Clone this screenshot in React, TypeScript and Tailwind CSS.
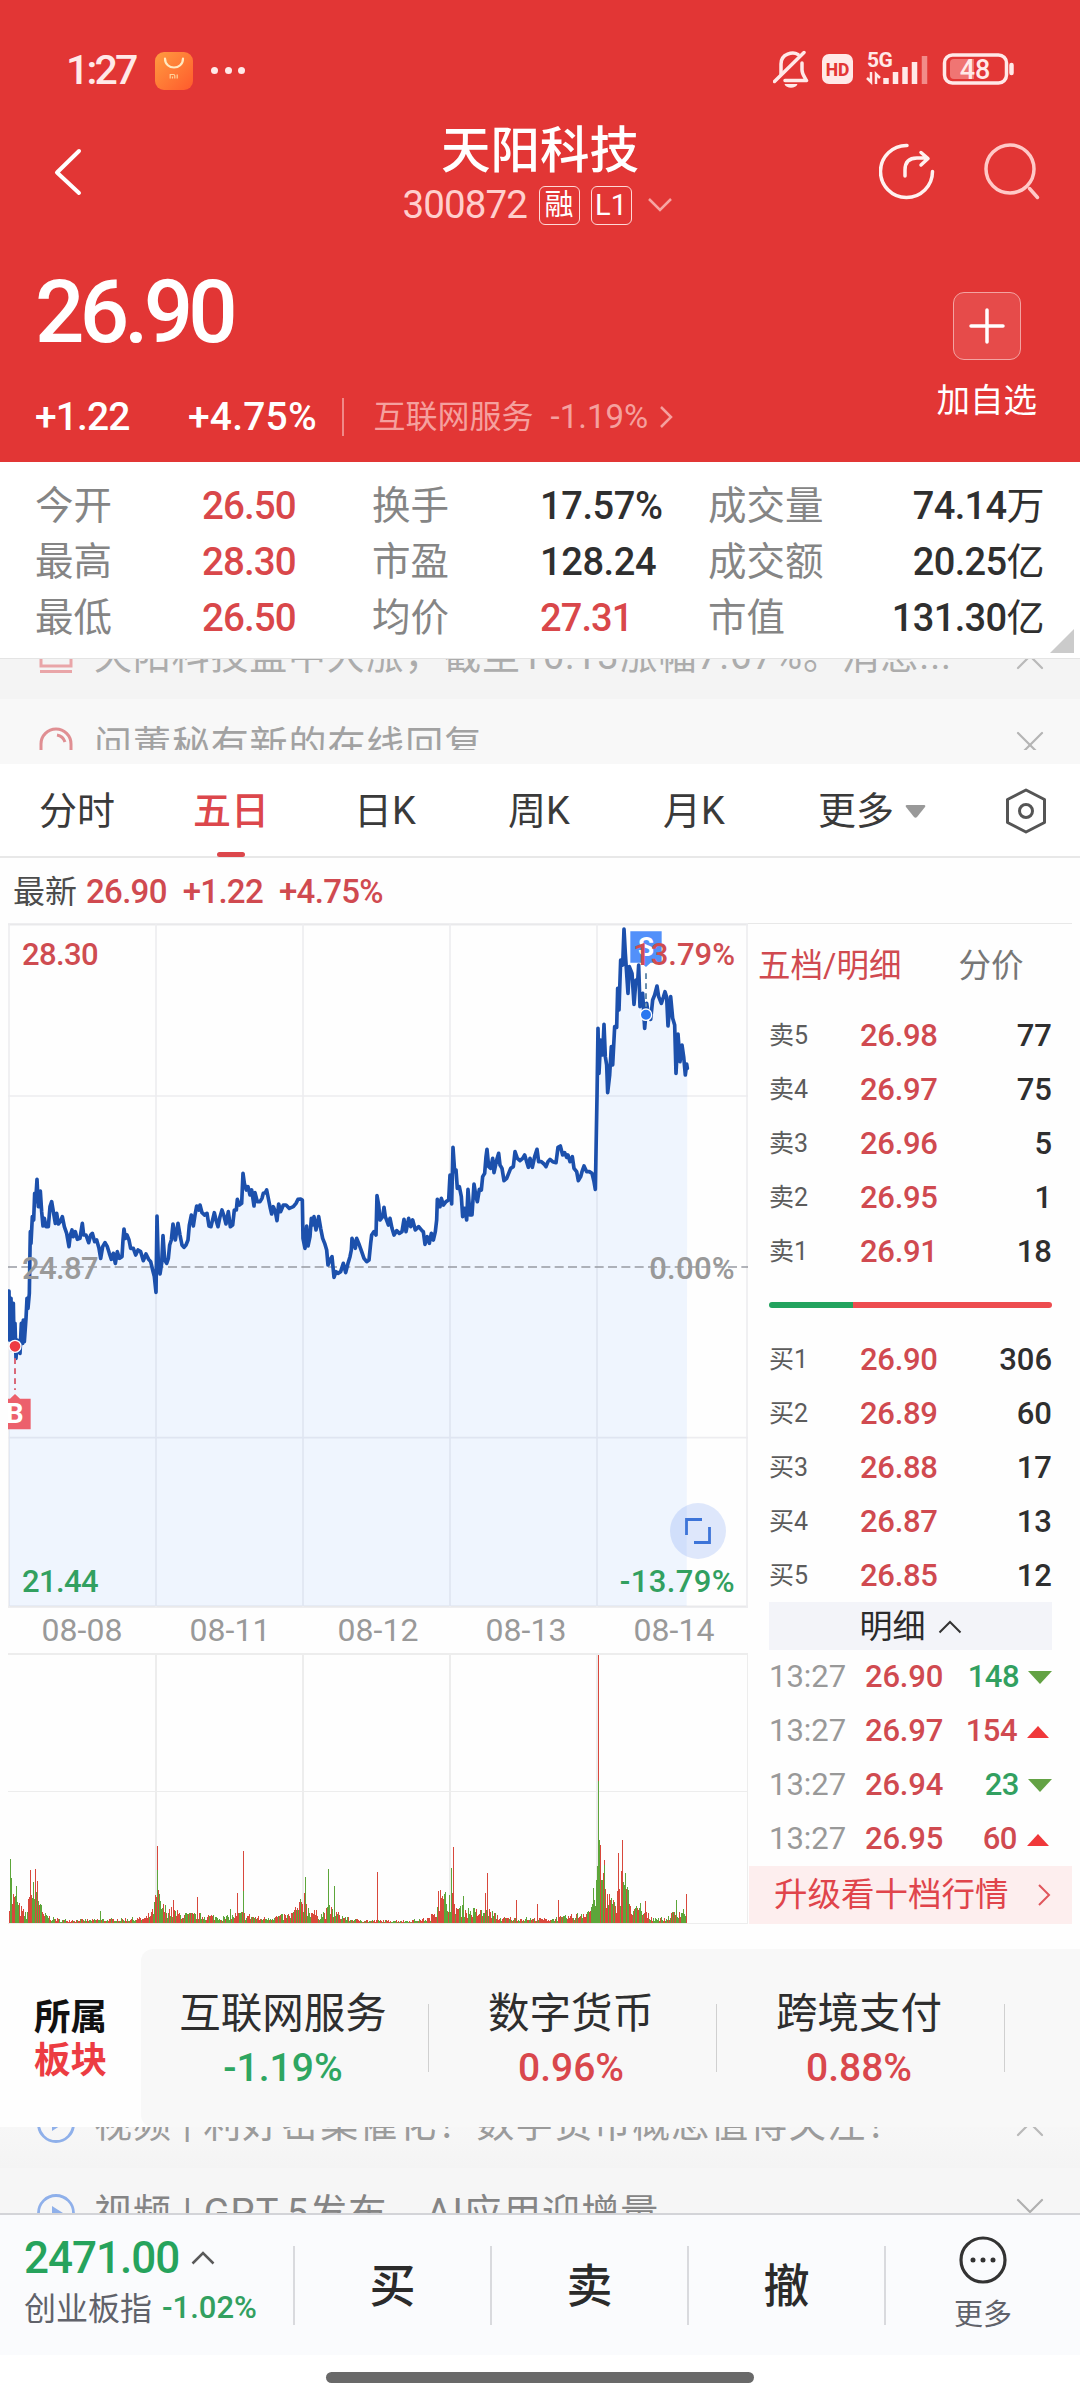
import { ChevronDown, ChevronUp, X } from "lucide-react"

const stats = [
  ["今开", "26.50", "换手", "17.57%", "成交量", "74.14万"],
  ["最高", "28.30", "市盈", "128.24", "成交额", "20.25亿"],
  ["最低", "26.50", "均价", "27.31", "市值", "131.30亿"],
]

const asks = [
  ["卖5", "26.98", "77"],
  ["卖4", "26.97", "75"],
  ["卖3", "26.96", "5"],
  ["卖2", "26.95", "1"],
  ["卖1", "26.91", "18"],
]

const bids = [
  ["买1", "26.90", "306"],
  ["买2", "26.89", "60"],
  ["买3", "26.88", "17"],
  ["买4", "26.87", "13"],
  ["买5", "26.85", "12"],
]

const trades = [
  { time: "13:27", price: "26.90", volume: "148", up: false },
  { time: "13:27", price: "26.97", volume: "154", up: true },
  { time: "13:27", price: "26.94", volume: "23", up: false },
  { time: "13:27", price: "26.95", volume: "60", up: true },
]

const sectors = [
  { name: "互联网服务", change: "-1.19%" },
  { name: "数字货币", change: "0.96%" },
  { name: "跨境支付", change: "0.88%" },
]

const dates = ["08-08", "08-11", "08-12", "08-13", "08-14"]

// price line, drawn on a canvas three times the size of the chart
const priceLine =
  "27,1143 29,1290 33,1165 36,1320 40,1180 42,1290 45,1240 48,1345 52,1290 60,1330 64,1240 68,1300 70,1230 73,1295 78,1225 81,1165 84,1195 88,1150 90,1020 91,965 93,1000 97,920 101,930 104,850 107,875 111,808 115,890 121,843 125,905 129,948 133,925 138,950 145,950 150,890 155,875 160,905 166,940 170,910 175,942 181,935 187,920 193,950 200,970 207,1010 211,975 216,960 220,980 226,965 232,988 240,985 247,940 251,975 258,975 266,998 272,975 277,970 284,995 290,990 297,1015 302,1045 308,1010 315,998 322,1010 328,1030 334,1048 340,1030 346,1060 352,1025 358,1045 366,1040 369,990 372,957 376,985 381,975 387,990 392,1015 400,1015 407,1035 414,1020 422,1025 430,1052 438,1032 446,1048 452,1055 458,1080 463,1100 468,1147 " +
  "471,918 475,1060 480,1092 485,1060 489,977 494,1050 500,1060 505,1045 509,1005 514,990 519,942 526,990 534,940 540,975 546,1005 552,1012 558,1005 564,990 568,945 574,915 580,948 585,915 590,888 596,900 600,885 606,908 614,915 621,910 627,948 633,950 643,908 648,930 654,950 660,920 666,900 672,918 678,942 685,905 691,950 698,945 703,900 709,900 712,868 718,885 725,880 729,790 733,820 739,840 744,830 750,855 755,840 762,888 765,848 772,875 780,875 786,865 790,850 796,848 800,840 806,870 811,895 815,912 820,890 826,905 831,932 836,882 842,905 850,885 858,885 868,895 880,890 888,880 894,868 902,867 907,870 " +
  "909,985 915,1015 920,948 924,1008 930,980 934,925 938,945 942,920 948,960 956,920 962,955 968,985 974,1000 980,1020 984,1065 990,1050 996,1040 1002,1102 1008,1085 1014,1090 1022,1085 1030,1060 1037,1088 1044,1060 1050,1040 1054,1020 1056,985 1062,1000 1066,1015 1070,985 1078,1005 1085,1025 1092,1045 1100,1055 1107,1050 1112,1000 1115,975 1122,965 1128,975 1131,857 1136,885 1140,930 1148,920 1152,892 1156,920 1165,945 1170,925 1176,955 1182,975 1190,962 1198,970 1206,965 1212,928 1218,965 1226,925 1232,950 1238,930 1246,960 1256,950 1266,962 1270,965 1275,1003 1282,980 1288,1000 1294,970 1300,990 1306,965 1310,930 1312,868 1320,890 1324,865 1330,885 1338,875 1346,870 " +
  "1350,795 1355,882 1359,712 1364,785 1368,780 1372,835 1378,830 1384,860 1388,920 1394,895 1400,930 1404,838 1410,915 1416,915 1422,822 1428,860 1432,875 1438,838 1444,840 1448,800 1454,790 1458,740 1461,718 1466,770 1472,775 1478,745 1482,788 1490,750 1496,730 1500,765 1506,775 1512,812 1520,805 1526,790 1532,775 1540,770 1545,725 1552,745 1560,752 1568,745 1574,735 1580,755 1585,772 1590,745 1597,772 1604,740 1611,718 1616,755 1624,755 1632,762 1638,770 1644,755 1650,748 1658,755 1668,758 1674,712 1681,708 1688,735 1694,728 1700,742 1704,735 1710,755 1717,740 1722,775 1730,785 1735,812 1742,800 1746,785 1752,768 1760,785 1768,785 1776,790 1782,815 1786,838 " +
  "1791,560 1794,355 1797,490 1802,390 1808,435 1812,343 1816,440 1820,465 1823,548 1829,495 1834,410 1838,465 1844,350 1850,352 1853,235 1857,300 1862,150 1868,165 1872,57 1876,130 1884,250 1888,170 1896,190 1902,283 1908,210 1913,215 1916,165 1920,290 1928,250 1934,355 1940,280 1946,320 1952,328 1958,270 1964,255 1971,228 1976,260 1984,280 1990,262 1995,245 2000,262 2004,348 2012,260 2018,325 2024,345 2028,490 2034,372 2040,455 2046,405 2051,440 2056,495 2060,462 2062,475"

// [x, typical height] of the volume bars
const envelope = [
  [9, 40], [14, 32], [20, 18], [26, 10], [30, 38], [37, 46], [42, 12], [50, 7], [60, 4], [100, 4], [145, 6], [152, 14],
  [157, 38], [162, 20], [180, 11], [200, 10], [225, 7], [240, 12], [260, 6], [290, 10], [302, 26], [312, 15], [320, 10],
  [330, 18], [340, 9], [350, 5], [370, 3], [410, 3], [430, 6], [438, 26], [450, 36], [458, 18], [480, 14], [490, 14],
  [500, 6], [550, 5], [575, 9], [590, 18], [597, 55], [600, 75], [607, 36], [615, 20], [620, 55], [625, 52], [630, 22],
  [640, 15], [650, 8], [665, 5], [675, 14], [687, 16],
]

const spikes: [number, number, string][] = [
  [10, 64, "g"], [11, 45, "g"], [16, 37, "g"], [30, 53, "r"], [35, 54, "r"], [37, 42, "r"], [100, 12, "g"],
  [157, 77, "r"], [157, 53, "g"], [173, 23, "r"], [197, 26, "r"], [230, 14, "g"], [237, 30, "r"], [243, 72, "r"],
  [243, 32, "g"], [304, 30, "r"], [305, 46, "g"], [328, 54, "g"], [334, 37, "g"], [377, 51, "r"], [438, 32, "r"],
  [440, 33, "r"], [451, 55, "g"], [453, 76, "r"], [463, 27, "g"], [485, 30, "r"], [487, 50, "r"], [516, 23, "r"],
  [537, 19, "r"], [558, 23, "r"], [598, 268, "r"], [598, 142, "g"], [599, 83, "g"], [600, 78, "r"], [604, 63, "r"],
  [604, 58, "g"], [618, 70, "r"], [622, 83, "r"], [625, 50, "g"], [640, 20, "g"], [645, 22, "r"], [676, 23, "g"], [686, 29, "r"],
]

function buildBars() {
  const bars: [number, number, string][] = []
  let seed = 7
  const next = () => {
    seed = (seed * 16807) % 2147483647
    return seed / 2147483647
  }
  let k = 0
  for (let x = 9; x < 687; x++) {
    while (k < envelope.length - 2 && envelope[k + 1][0] <= x) k++
    const [x0, h0] = envelope[k]
    const [x1, h1] = envelope[k + 1]
    const base = h0 + ((h1 - h0) * (x - x0)) / (x1 - x0)
    bars.push([x, Math.max(1, Math.round(base * (0.3 + next() * 0.75))), next() > 0.48 ? "r" : "g"])
  }
  return bars.concat(spikes)
}

const bars = buildBars()

function StatusBar() {
  return (
    <div className="flex h-[106px] items-center pt-[35px] pr-[65px] pl-[66px] text-[#ffe9e8]">
      <span className="w-[89px] text-[41px] font-medium leading-none tracking-[-2.800px]">1:27</span>
      <svg width="38" height="38" viewBox="0 0 38 38">
        <defs>
          <linearGradient id="mi" x1="0" y1="0" x2="1" y2="1">
            <stop offset="0" stopColor="#ff9c40" />
            <stop offset="1" stopColor="#ff5a2c" />
          </linearGradient>
        </defs>
        <rect width="38" height="38" rx="9" fill="url(#mi)" />
        <path d="M10 6.500c0 12 18 12 18 0" fill="none" stroke="#ffe9c0" strokeWidth="2.200" strokeLinecap="round" />
        <path d="M15.200 26.500v-4h3.300q1.300 0 1.300 1.300v2.700M17.500 24.500v2M22.200 22.500v4" fill="none" stroke="#ffd49a" strokeWidth="1.200" />
      </svg>
      <div className="ml-[18px] flex gap-[6px]">
        <span className="size-[7px] rounded-full bg-[#ffe9e8]" />
        <span className="ml-[0.500px] size-[7px] rounded-full bg-[#ffe9e8]" />
        <span className="size-[7px] rounded-full bg-[#ffe9e8]" />
      </div>
      <svg className="ml-auto" width="242" height="42" viewBox="0 0 242 42" fill="none" stroke="#ffe9e8">
        <path d="M25 4.500C20 1.500 8 3.500 8 14v10M29 13v7c0 4 2 6 4.500 10.500H12" strokeWidth="3.500" strokeLinecap="round" strokeLinejoin="round" />
        <path d="M1.500 31.500L31 2.500" strokeWidth="3.500" strokeLinecap="round" />
        <path d="M11.500 34h13c-1.500 5-11.500 5-13 0z" fill="#ffe9e8" stroke="none" />
        <rect x="49" y="4" width="31" height="30" rx="7" fill="#ffe9e8" stroke="none" />
        <text x="64.500" y="25.500" textAnchor="middle" fill="#e23635" stroke="none" fontSize="17.500" fontWeight="800">HD</text>
        <text x="94" y="16.500" fill="#ffe9e8" stroke="none" fontSize="21" fontWeight="700" letterSpacing="-0.5">5G</text>
        <path d="M94 28l4 4v-10M103 34V24l4 4" strokeWidth="2.500" />
        <path d="M113 34v-6M122.500 34V22M132 34V17M141.500 34V12" strokeWidth="5.500" />
        <path d="M151.500 34V6" stroke="#f28b89" strokeWidth="5.500" />
        <rect x="171.500" y="5" width="62" height="28" rx="8" strokeWidth="3.500" />
        <path d="M178 9h23v20h-20q-4 0-4-4V13q0-4 4-4z" fill="#f07573" stroke="none" />
        <path d="M238.500 15v8" strokeWidth="4.500" strokeLinecap="round" />
        <text x="202" y="28.500" textAnchor="middle" fill="#ffe9e8" stroke="none" fontSize="27" fontWeight="500">48</text>
      </svg>
    </div>
  )
}

function Header() {
  return (
    <header className="h-[462px] bg-[#e23635] text-white">
      <StatusBar />
      <div className="flex h-[132px] pt-[14px]">
        <div className="w-[300px] pt-[27px] pl-[52px]">
          <svg width="32" height="50" viewBox="0 0 32 50" fill="none" stroke="white" strokeWidth="4" strokeLinecap="round" strokeLinejoin="round">
            <path d="M27 4L5 25.500 27 46" />
          </svg>
        </div>
        <div className="flex w-[480px] flex-col items-center">
          <h1 className="h-[55px] pt-[2px] text-[49.500px] leading-[58px] font-medium">天阳科技</h1>
          <div className="mr-[5px] flex h-[60px] items-center">
            <span className="w-[136px] text-[38.500px] leading-none tracking-[-0.9px] text-[#ffcfcd]">300872</span>
            <span className="flex h-[39px] w-[41px] items-center justify-center rounded-[6px] border-[1.500px] border-[#ffd8d6] text-[29px] leading-none">融</span>
            <span className="ml-[11px] flex h-[39px] w-[41px] items-center justify-center rounded-[6px] border-[1.500px] border-[#ffd8d6] text-[29px] leading-none">L1</span>
            <svg className="ml-[15px]" width="26" height="16" viewBox="0 0 26 16" fill="none" stroke="#f7a5a3" strokeWidth="2.500">
              <path d="M2 2l11 11L24 2" />
            </svg>
          </div>
        </div>
        <svg className="ml-[99px]" width="164" height="104" viewBox="879 120 164 104" fill="none" strokeLinecap="round" strokeLinejoin="round">
          <path d="M907 145.500a26 26 0 1 0 25.500 26" stroke="#fff1f0" strokeWidth="3.500" />
          <path d="M905 176v-6c0-9 5-12 12-12h10M921 152.500l7 6-7 6.500" stroke="#fff1f0" strokeWidth="3.500" />
          <circle cx="1010" cy="169" r="24" stroke="#ffc9c7" strokeWidth="3.500" />
          <path d="M1029.500 188.500l8 9" stroke="#ffc9c7" strokeWidth="3.500" />
        </svg>
      </div>
      <div className="flex h-[224px] justify-between pr-[43px] pl-[35px]">
        <div>
          <div className="h-[132px] pt-[26px] text-[87px] leading-[96px] font-medium tracking-[-4.800px]">26.90</div>
          <div className="flex h-[94px] items-center text-[39px] font-medium">
            <span className="w-[153px] tracking-[-0.9px]">+1.22</span>
            <span className="w-[154px] tracking-[0.2px]">+4.75%</span>
            <span className="h-[38px] w-[1.500px] bg-[#f08988]" />
            <span className="ml-[30px] text-[32px] font-normal text-[#f5a09e]">互联网服务</span>
            <span className="ml-[17px] text-[33px] font-normal text-[#f5a09e]">-1.19%</span>
            <svg className="ml-[11px]" width="14" height="24" viewBox="0 0 14 24" fill="none" stroke="#f5a09e" strokeWidth="2.500">
              <path d="M2 2l10 10L2 22" />
            </svg>
          </div>
        </div>
        <div className="flex flex-col items-center pt-[54px]">
          <div className="flex size-[68px] items-center justify-center rounded-[11px] border-[1.500px] border-[#f3a3a1] bg-[#e64b4a]">
            <svg width="36" height="36" viewBox="0 0 36 36" stroke="white" strokeWidth="3.500" strokeLinecap="round">
              <path d="M18 2v32M2 18h32" />
            </svg>
          </div>
          <span className="mt-[20px] text-[33.500px] leading-[42px]">加自选</span>
        </div>
      </div>
    </header>
  )
}

function Stats() {
  return (
    <section className="relative h-[197px] border-b border-[#e4e4e4] bg-white pt-[16px] pr-[36px] pl-[35px]">
      {stats.map(([a, av, b, bv, c, cv]) => (
        <div key={a} className="flex h-[56px] items-center text-[38px] text-[#858585]">
          <span className="w-[167px] text-[38.500px]">{a}</span>
          <span className="w-[170px] text-[38.500px] font-medium tracking-[-0.9px] text-[#d9474a]">{av}</span>
          <span className="w-[168px] text-[38.500px]">{b}</span>
          <span className={bv === "27.31" ? "w-[168px] font-medium tracking-[-0.9px] text-[#d9474a]" : "w-[168px] font-medium tracking-[-0.4px] text-[#2f2f2f]"}>{bv}</span>
          <span className="text-[38.500px]">{c}</span>
          <span className="ml-auto tracking-[-0.6px] text-[#2f2f2f]">
            <span className="font-medium">{cv.slice(0, -1)}</span>
            {cv.slice(-1)}
          </span>
        </div>
      ))}
      <svg className="absolute right-[6px] bottom-[5px]" width="24" height="24" viewBox="0 0 24 24">
        <path d="M24 0v24H0z" fill="#cbcbcb" />
      </svg>
    </section>
  )
}

function TopNotices() {
  return (
    <section className="h-[105px]">
      <div className="flex h-[40px] overflow-hidden bg-[#f4f4f4]">
        <div className="mt-[-29px] flex h-[52px] w-full items-center pr-[26px] pl-[38px] text-[#acacac]">
          <svg width="36" height="40" viewBox="0 0 36 40" fill="none" stroke="#e9a5a8" strokeWidth="3">
            <path d="M3 4h30v26H3zM2 35.500h32M9 12h18M9 20h18" />
          </svg>
          <span className="ml-[20px] text-[38px] tracking-[0.8px] whitespace-nowrap">天阳科技盘中大涨，截至10:13涨幅7.67%。消息...</span>
          <ChevronUp className="mt-[12px] ml-auto size-[48px] shrink-0 text-[#b9b9b9]" strokeWidth={1.1} />
        </div>
      </div>
      <div className="h-[65px] bg-[#f8f8f8]">
        <div className="h-[51px] overflow-hidden">
          <div className="mt-[20px] flex h-[52px] items-center pr-[26px] pl-[38px] text-[#a2a2a2]">
            <svg width="36" height="40" viewBox="0 0 36 40" fill="none" stroke="#e08f93" strokeWidth="3">
              <path d="M3 36V19a15 15 0 0 1 30 0v17zM19 10q6 1 8 7" />
            </svg>
            <span className="ml-[20px] text-[38px] tracking-[0.9px]">问董秘有新的在线回复</span>
            <X className="ml-auto size-[48px] text-[#b5b5b5]" strokeWidth={1.1} />
          </div>
        </div>
      </div>
    </section>
  )
}

function Tabs() {
  return (
    <nav className="flex h-[94px] items-center border-b-2 border-[#e8e8e8] bg-white pt-[2px] pl-[39px] text-[38px] text-[#3a3a3a]">
      <span className="w-[154px]">分时</span>
      <span className="relative flex h-full w-[161px] items-center font-medium text-[#dc474c]">
        五日
        <i className="absolute bottom-[-1px] left-[24px] h-[5px] w-[28px] rounded-full bg-[#dc474c]" />
      </span>
      <span className="w-[154px]">日K</span>
      <span className="w-[155px]">周K</span>
      <span className="w-[155px]">月K</span>
      <span>更多</span>
      <svg className="ml-[11px]" width="21" height="13" viewBox="0 0 21 13">
        <path d="M2 0h17q2 0 1 2l-8 10q-1.500 1.500-3 0L1 2q-1-2 1-2z" fill="#999" />
      </svg>
      <svg className="ml-[78px]" width="44" height="48" viewBox="0 0 44 48" fill="none" stroke="#555" strokeWidth="3" strokeLinejoin="round">
        <path d="M22 3l18.500 9.500v23L22 45 3.500 35.500v-23z" />
        <circle cx="22" cy="24" r="6.500" />
      </svg>
    </nav>
  )
}

function PriceChart() {
  return (
    <div className="relative h-[685px]">
      <svg width="740" height="685" viewBox="24 39 2220 2055" fill="none">
        <path d="M24 43h2220M24 2090h2220" stroke="#e9e9eb" strokeWidth="7" />
        <path d="M24 558h2220M24 1583h2220M27 43v2050M468 43v2050M909 43v2050M1350 43v2050M1791 43v2050M2241 43v2050" stroke="#ededf0" strokeWidth="5" />
        <polygon points={`27,2088 ${priceLine} 2060,2088`} fill="#3b8cff" fillOpacity="0.08" />
        <path d="M24 1071h2220" stroke="#989ba3" strokeWidth="5" strokeDasharray="27 13" />
        <polyline points={priceLine} stroke="#1c50ac" strokeWidth="11" strokeLinejoin="round" strokeLinecap="round" />
        <path d="M45 1345v95" stroke="#d9697a" strokeWidth="6" strokeDasharray="17 13" />
        <circle cx="45" cy="1309" r="18" fill="#ee3b43" stroke="white" strokeWidth="4" />
        <path d="M24 1466h6l15-14 15 14h32v92H24z" fill="#ec606c" />
        <text x="44" y="1540" textAnchor="middle" fill="white" fontSize="84" fontWeight="700">B</text>
        <path d="M1938 190v100" stroke="#6a8fae" strokeWidth="6" strokeDasharray="17 13" />
        <circle cx="1938" cy="314" r="17" fill="#2a78f0" stroke="white" strokeWidth="4" />
        <path d="M1891 64h94v94h-33l-14 13-14-13h-33z" fill="#5290fa" />
        <text x="1938" y="137" textAnchor="middle" fill="white" fontSize="78" fontWeight="700">S</text>
      </svg>
      <div className="absolute inset-0 flex flex-col justify-between pt-[15px] pr-[13px] pb-[9px] pl-[14px] text-[31px] leading-[34px] font-medium">
        <div className="flex justify-between text-[#cf4c51]">
          <span className="tracking-[-0.6px]">28.30</span>
          <span>13.79%</span>
        </div>
        <div className="mt-[1px] flex justify-between text-[#999]">
          <span className="tracking-[-0.6px]">24.87</span>
          <span className="tracking-[0.3px]">0.00%</span>
        </div>
        <div className="flex justify-between text-[#32a060]">
          <span className="tracking-[-0.6px]">21.44</span>
          <span className="tracking-[0.4px]">-13.79%</span>
        </div>
      </div>
      <div className="absolute right-[22px] bottom-[49px] flex size-[56px] items-center justify-center rounded-full bg-[#3f78f0]/17">
        <svg width="26" height="26" viewBox="0 0 26 26" fill="none" stroke="#3d74d8" strokeWidth="2.800">
          <path d="M1.500 17V1.500H17M24.500 9v15.500H9" />
        </svg>
      </div>
    </div>
  )
}

function VolumeChart() {
  return (
    <svg className="block" width="740" height="271" viewBox="8 0 740 271" shapeRendering="crispEdges">
      <path d="M8 1h740M8 138.500h740M8 270.500h740M156 0v270M303 0v270M450 0v270M597 0v270M747.500 0v270" stroke="#ededed" strokeWidth="1.500" />
      {bars.map(([x, h, c], i) => (
        <rect key={i} x={x} y={270 - h} width="1" height={h} fill={c === "r" ? "#d8483c" : "#5da63a"} />
      ))}
    </svg>
  )
}

function BookRow({ row }: { row: string[] }) {
  return (
    <div className="flex h-[54px] items-center pt-[2px] font-medium">
      <span className="w-[91px] text-[25px] font-normal text-[#5c5c5c]">{row[0]}</span>
      <span className="text-[31px] tracking-[-0.3px] text-[#d04a50]">{row[1]}</span>
      <span className="ml-auto text-[31px] text-[#2f2f2f]">{row[2]}</span>
    </div>
  )
}

function OrderBook() {
  return (
    <aside className="w-[324px] border-t border-[#e8e8e8]">
      <div className="flex h-[84px] items-center pl-[10px] text-[32.500px]">
        <span className="text-[#d04a50]">五档/明细</span>
        <span className="ml-[57px] text-[#777]">分价</span>
      </div>
      <div className="pr-[20px] pl-[21px]">
        {asks.map((row) => (
          <BookRow key={row[0]} row={row} />
        ))}
        <div className="flex h-[54px] items-center">
          <div className="h-[6px] w-[84px] rounded-l-full bg-[#22a35e]" />
          <div className="h-[6px] flex-1 rounded-r-full bg-[#ed4c4f]" />
        </div>
        {bids.map((row) => (
          <BookRow key={row[0]} row={row} />
        ))}
        <div className="flex h-[48px] items-center justify-center bg-[#f3f4f9] pt-[2px] text-[33px] text-[#2b2b2b]">
          明细
          <svg className="ml-[12px]" width="24" height="14" viewBox="0 0 24 14" fill="none" stroke="#333" strokeWidth="2">
            <path d="M1.500 12.500L12 2l10.500 10.500" />
          </svg>
        </div>
        {trades.map((t, i) => (
          <div key={i} className="flex h-[54px] items-center pt-[1px] text-[31px] font-medium">
            <span className="w-[96px] font-normal text-[#999]">{t.time}</span>
            <span className="tracking-[-0.2px] text-[#d04a50]">{t.price}</span>
            <span className={t.up ? "mr-[10px] ml-auto tracking-[-0.5px] text-[#d04a50]" : "mr-[9px] ml-auto tracking-[-0.5px] text-[#32a060]"}>{t.volume}</span>
            {t.up ? (
              <svg className="mr-[3px]" width="22" height="12" viewBox="0 0 22 12">
                <path d="M11 0l11 12H0z" fill="#f0383a" />
              </svg>
            ) : (
              <svg width="24" height="13" viewBox="0 0 24 13">
                <path d="M0 0h24L12 13z" fill="#63a244" />
              </svg>
            )}
          </div>
        ))}
      </div>
      <div className="ml-[1px] flex h-[58px] items-center bg-[#fdeeee] pr-[21px] pl-[25px] text-[33.500px] text-[#e0444b]">
        升级看十档行情
        <svg className="ml-auto" width="14" height="24" viewBox="0 0 14 24" fill="none" stroke="#e0565c" strokeWidth="2">
          <path d="M2 2l10 10L2 22" />
        </svg>
      </div>
    </aside>
  )
}

function Sectors() {
  return (
    <section className="mt-[25px] flex h-[178px]">
      <div className="flex w-[141px] flex-col items-center justify-center pt-[2px] text-[36.500px] leading-[43px] font-bold">
        <span className="text-[#111]">所属</span>
        <span className="text-[#ec3c42]">板块</span>
      </div>
      <div className="flex flex-1 overflow-hidden rounded-l-[12px] bg-[#f8f8f8]">
        {sectors.map((s) => (
          <div key={s.name} className="flex w-[288px] shrink-0 items-center">
            <div className="flex-1 pt-[4px] pr-[3px] text-center">
              <div className="text-[41.500px] leading-[56px] text-[#2e2e2e]">{s.name}</div>
              <div className={s.change[0] === "-" ? "text-[39px] leading-[52px] font-medium text-[#2ea661]" : "text-[39px] leading-[52px] font-medium text-[#d9474c]"}>{s.change}</div>
            </div>
            <div className="h-[68px] w-px bg-[#d0d0d0]" />
          </div>
        ))}
      </div>
    </section>
  )
}

function PlayIcon() {
  return (
    <svg className="shrink-0" width="40" height="40" viewBox="0 0 40 40" fill="none" stroke="#8fb0ea" strokeWidth="2.800">
      <circle cx="20" cy="20" r="17.500" />
      <path d="M16 13l11 7-11 7z" fill="#8fb0ea" stroke="none" />
    </svg>
  )
}

function BottomNotices() {
  return (
    <section className="h-[86px] bg-[#f6f6f6]">
      <div className="h-[41px] overflow-hidden bg-gradient-to-b from-[#f7f7f7] to-[#f4f4f4]">
        <div className="mt-[-28px] flex h-[50px] items-center pr-[26px] pl-[36px] text-[38px] whitespace-nowrap text-[#9b9b9b]">
          <PlayIcon />
          <span className="ml-[18px] tracking-[1px]">视频 | 利好密集催化！数字货币概念值得关注！</span>
          <ChevronUp className="mt-[10px] ml-auto size-[48px] shrink-0 text-[#b9b9b9]" strokeWidth={1.1} />
        </div>
      </div>
      <div className="h-[45px] overflow-hidden">
        <div className="mt-[21px] flex h-[48px] items-center pr-[26px] pl-[36px] text-[38px] text-[#858585]">
          <PlayIcon />
          <span className="ml-[18px] tracking-[1.1px]">视频 | GPT-5发布，AI应用迎增量</span>
          <ChevronDown className="mt-[-14px] ml-auto size-[48px] text-[#b0b0b0]" strokeWidth={1.1} />
        </div>
      </div>
    </section>
  )
}

function TradeBar() {
  return (
    <footer className="flex h-[142px] items-center border-t-2 border-[#d3d4d8] bg-[#fafbfd] text-[#2b2b2b]">
      <div className="w-[293px] pb-[5px] pl-[24px]">
        <div className="flex h-[52px] items-center text-[44px] font-medium tracking-[-1px] text-[#26a35c]">
          2471.00
          <svg className="ml-[12px]" width="24" height="14" viewBox="0 0 24 14" fill="none" stroke="#5a5a5a" strokeWidth="2.500">
            <path d="M1.500 12.500L12 2l10.500 10.500" />
          </svg>
        </div>
        <div className="flex h-[50px] items-center text-[32px] text-[#60626a]">
          创业板指
          <span className="ml-[10px] text-[31px] font-medium text-[#32a060]">-1.02%</span>
        </div>
      </div>
      {["买", "卖", "撤"].map((label) => (
        <div key={label} className="flex h-[79px] w-[197px] items-center justify-center border-l-2 border-[#d9dade] pt-[2px] text-[46px] font-medium">
          {label}
        </div>
      ))}
      <div className="flex h-[79px] flex-1 flex-col items-center justify-center border-l-2 border-[#d9dade]">
        <svg className="shrink-0" width="50" height="50" viewBox="0 0 50 50" fill="none" stroke="#333" strokeWidth="3.200">
          <circle cx="25" cy="25" r="22" />
          <path d="M15 25h.01M25 25h.01M35 25h.01" strokeWidth="5" strokeLinecap="round" />
        </svg>
        <span className="mt-[10px] text-[29px] leading-[40px] text-[#60626a]">更多</span>
      </div>
    </footer>
  )
}

export default function App() {
  return (
    <div className='h-[2400px] w-[1080px] overflow-hidden bg-[#fefefe] font-["Roboto","Noto_Sans_CJK_SC",sans-serif]'>
      <Header />
      <Stats />
      <TopNotices />
      <Tabs />
      <div className="flex h-[66px] items-center gap-[16px] pt-[1px] pl-[13px] text-[33px] font-medium tracking-[-0.7px] text-[#d04a50]">
        <span>
          <span className="mr-[9px] text-[32px] font-normal tracking-normal text-[#4c4c4c]">最新</span>26.90
        </span>
        <span>+1.22</span>
        <span>+4.75%</span>
      </div>
      <main className="mt-[-1px] flex pl-[8px]">
        <div className="w-[740px]">
          <PriceChart />
          <div className="grid h-[45px] grid-cols-5 items-center text-center text-[32px] leading-[45px] text-[#999]">
            {dates.map((d) => (
              <span key={d}>{d}</span>
            ))}
          </div>
          <VolumeChart />
        </div>
        <OrderBook />
      </main>
      <Sectors />
      <BottomNotices />
      <TradeBar />
      <div className="flex h-[45px] justify-center bg-white pt-[17px]">
        <div className="h-[11px] w-[428px] rounded-full bg-[#696969]" />
      </div>
    </div>
  )
}
